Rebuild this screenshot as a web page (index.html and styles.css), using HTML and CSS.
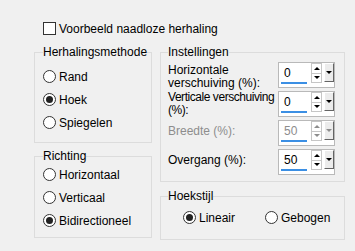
FILE: index.html
```html
<!DOCTYPE html>
<html lang="nl">
<head>
    <meta charset="UTF-8">
    <title>Naadloze herhaling</title>
    <link rel="stylesheet" href="styles.css">
</head>
<body>
    <div class="dlg">
        <div class="check_row"><span class="box"></span>Voorbeeld naadloze herhaling</div>

        <div class="cols">
            <div class="col col_left">
                <fieldset class="grp grp_method">
                    <legend>Herhalingsmethode</legend>
                    <div class="opt"><span class="radio"></span>Rand</div>
                    <div class="opt"><span class="radio on"></span>Hoek</div>
                    <div class="opt"><span class="radio"></span>Spiegelen</div>
                </fieldset>
                <fieldset class="grp grp_dir">
                    <legend>Richting</legend>
                    <div class="opt"><span class="radio"></span>Horizontaal</div>
                    <div class="opt"><span class="radio"></span>Verticaal</div>
                    <div class="opt"><span class="radio on"></span>Bidirectioneel</div>
                </fieldset>
            </div>

            <div class="col col_right">
                <fieldset class="grp grp_settings">
                    <legend>Instellingen</legend>
                    <div class="row">
                        <span class="lbl lbl_first">Horizontale<br>verschuiving (%):</span>
                        <div class="spin">
                            <div class="val">0</div>
                            <div class="arr"><span class="up"></span><span class="dn"></span></div>
                            <div class="drop"><span class="dn"></span></div>
                        </div>
                    </div>
                    <div class="row">
                        <span class="lbl lbl_tight">Verticale verschuiving<br>(%):</span>
                        <div class="spin">
                            <div class="val">0</div>
                            <div class="arr"><span class="up"></span><span class="dn"></span></div>
                            <div class="drop"><span class="dn"></span></div>
                        </div>
                    </div>
                    <div class="row off">
                        <span class="lbl lbl_mid">Breedte (%):</span>
                        <div class="spin">
                            <div class="val">50</div>
                            <div class="arr"><span class="up"></span><span class="dn"></span></div>
                            <div class="drop"><span class="dn"></span></div>
                        </div>
                    </div>
                    <div class="row">
                        <span class="lbl lbl_mid">Overgang (%):</span>
                        <div class="spin">
                            <div class="val">50</div>
                            <div class="arr"><span class="up"></span><span class="dn"></span></div>
                            <div class="drop"><span class="dn"></span></div>
                        </div>
                    </div>
                </fieldset>
                <fieldset class="grp grp_corner">
                    <legend>Hoekstijl</legend>
                    <div class="opt_row">
                        <div class="opt opt_wide"><span class="radio on"></span>Lineair</div>
                        <div class="opt"><span class="radio"></span>Gebogen</div>
                    </div>
                </fieldset>
            </div>
        </div>
    </div>
</body>
</html>
```

FILE: styles.css
```css
body {
    margin: 0;
    background-color: #f0f0f0;
    font-family: "Liberation Sans", Arial, sans-serif;
    font-size: 12px;
    color: #000;
}

.dlg {
    width: 355px;
    height: 251px;
    box-sizing: border-box;
    padding: 22px 0 0 34px;
}

.check_row {
    display: flex;
    align-items: center;
    gap: 3px;
    height: 13px;
    margin-left: 9px;
}

.box {
    width: 11px;
    height: 11px;
    border: 1px solid #333;
    background-color: #fff;
}

.cols {
    display: flex;
    gap: 8px;
    margin-top: 10px;
}

.col {
    display: flex;
    flex-direction: column;
}

.col_left {
    width: 118px;
    gap: 6px;
}

.col_right {
    width: 185px;
    gap: 7px;
}

/* group boxes */
.grp {
    margin: 0;
    min-width: 0;
    border: 1px solid #dcdcdc;
    padding: 0 8px;
}

.grp legend {
    padding: 0;
    line-height: 14px;
}

.grp_method {
    padding-top: 6px;
    padding-bottom: 8px;
}

.grp_dir {
    padding-bottom: 5px;
}

.grp_settings {
    padding: 3px 9px 7px 7px;
    display: flex;
    flex-direction: column;
    gap: 4px;
}

.grp_corner {
    padding: 3px 8px 10px 7px;
}

/* radio buttons */
.opt {
    display: flex;
    align-items: center;
    gap: 3px;
    height: 23px;
}

.opt_row {
    display: flex;
    padding-left: 15px;
}

.opt_wide {
    width: 82px;
}

.radio {
    width: 11px;
    height: 11px;
    border: 1px solid #333;
    border-radius: 50%;
    background-color: #fff;
    display: flex;
    align-items: center;
    justify-content: center;
}

.radio.on::after {
    content: "";
    width: 7px;
    height: 7px;
    border-radius: 50%;
    background-color: #222;
}

/* settings rows */
.row {
    display: flex;
    justify-content: space-between;
    align-items: flex-start;
    height: 25px;
}

.lbl {
    line-height: 13px;
    white-space: nowrap;
}

.lbl_first {
    margin-top: 2px;
}

.lbl_tight {
    letter-spacing: -0.45px;
}

.lbl_mid {
    margin-top: 4px;
    line-height: 15px;
}

.off .lbl,
.off .val {
    color: #8d8d8d;
}

.spin {
    flex-shrink: 0;
    display: flex;
    align-items: flex-start;
    width: 55px;
    height: 24px;
    border: 1px solid #b9b9b9;
    background-color: #fff;
}

.val {
    width: 23px;
    height: 18px;
    line-height: 19px;
    margin: 1px 0 0 2px;
    padding-left: 3px;
    border-bottom: 2px solid #3b8fe4;
}

.arr {
    display: flex;
    flex-direction: column;
    width: 9px;
    height: 18px;
    margin-left: 4px;
    border: 1px solid #c6c6c6;
}

.arr span,
.drop span {
    flex: 1;
    display: flex;
    align-items: center;
    justify-content: center;
}

.arr .up {
    border-bottom: 1px solid #c6c6c6;
}

.up::after {
    content: "";
    border-left: 3px solid transparent;
    border-right: 3px solid transparent;
    border-bottom: 3px solid #000;
}

.dn::after {
    content: "";
    border-left: 3px solid transparent;
    border-right: 3px solid transparent;
    border-top: 3px solid #000;
}

.off .up::after {
    border-bottom-color: #8d8d8d;
}

.off .dn::after {
    border-top-color: #8d8d8d;
}

.drop {
    display: flex;
    width: 8px;
    height: 17px;
    margin-left: 2px;
    background-color: #ececec;
    border: 1px solid;
    border-color: #fff #646464 #646464 #fff;
}
```
